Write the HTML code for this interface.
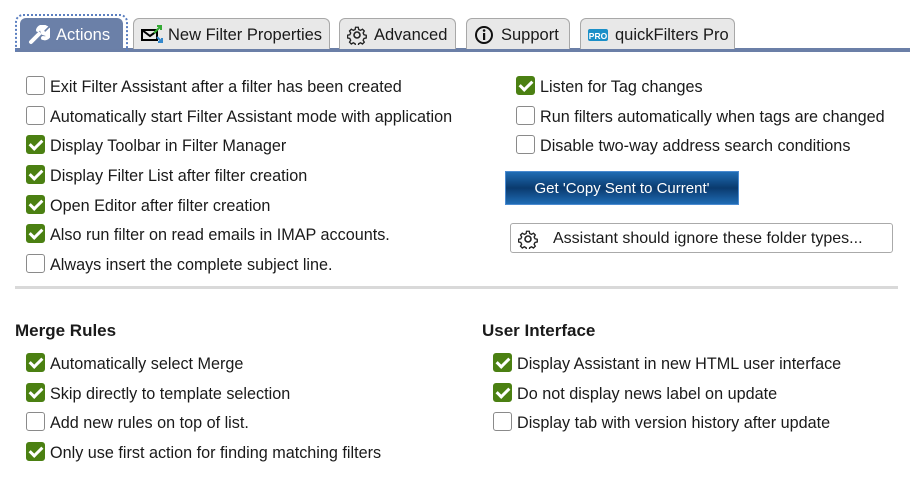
<!DOCTYPE html>
<html><head><meta charset="utf-8"><style>
*{box-sizing:border-box;margin:0;padding:0}
body{width:910px;height:480px;background:#fff;font-family:"Liberation Sans",sans-serif;color:#1a1a1a;position:relative;overflow:hidden;font-size:16.2px}
.a{position:absolute;white-space:nowrap}
.tab{position:absolute;top:18px;height:31px;border:1px solid #a8a8a8;border-bottom:none;border-radius:6px 6px 0 0;background:#e8e8e8;font-size:16.5px;line-height:32px;padding-left:34px}
.tab svg{position:absolute;left:7px;top:6px}
.cb{position:absolute;width:19px;height:19px;border:1px solid #8a8a8a;border-radius:3px;background:#fff}
.cb.on{background:#4b8012;border-color:#4b8012}
.cb.on:after{content:"";position:absolute;left:5px;top:1px;width:5px;height:10px;border:solid #fff;border-width:0 3px 3px 0;transform:rotate(45deg)}
.l{position:absolute;white-space:nowrap;line-height:22px}
h3{position:absolute;font-size:17px;font-weight:bold;white-space:nowrap}
</style></head><body>
<div class="a" style="left:15px;top:48px;width:895px;height:4px;background:#6b7fa7"></div>
<div class="a" style="left:15px;top:14px;width:113px;height:37px;border:2px dotted #5b7fc0;border-bottom:none;border-radius:8px 8px 0 0"></div>
<div class="tab" style="left:20px;width:103px;background:#6b80a8;border-color:#6b80a8;color:#fff;padding-left:35px">
<svg width="22" height="20" viewBox="0 0 22 20"><path d="M3 17 L11 9 M10 5 a5 5 0 0 1 7-3 l-3 3 1 3 3 1 3-3 a5 5 0 0 1-6 7" stroke="#fff" stroke-width="4" fill="none" stroke-linecap="round"/></svg>Actions</div>
<div class="tab" style="left:133px;width:197px">
<svg width="24" height="20" viewBox="0 0 24 20"><rect x="1" y="5" width="15" height="10" fill="none" stroke="#000" stroke-width="2"/><path d="M1 5 l8 6 7-5" stroke="#000" stroke-width="2" fill="none"/><path d="M13 8 l7-7 M16 1h4v4" stroke="#3a3" stroke-width="2" fill="none"/><path d="M16 12 l5 5 M17 17h4v-4" stroke="#38c" stroke-width="2" fill="none"/></svg>New Filter Properties</div>
<div class="tab" style="left:339px;width:117px">
<svg width="20" height="20" viewBox="0 0 20 20"><circle cx="10" cy="10" r="3" fill="none" stroke="#222" stroke-width="1.6"/><path d="M8.5 1.5h3l.5 2.5 2 1 2.2-1.3 2 2-1.3 2.2 1 2 2.5.5v3l-2.5.5-1 2 1.3 2.2-2 2-2.2-1.3-2 1-.5 2.5h-3l-.5-2.5-2-1-2.2 1.3-2-2 1.3-2.2-1-2-2.5-.5v-3l2.5-.5 1-2-1.3-2.2 2-2 2.2 1.3 2-1z" fill="none" stroke="#222" stroke-width="1.5" transform="scale(.9) translate(1 1)"/></svg>Advanced</div>
<div class="tab" style="left:466px;width:104px">
<svg width="20" height="20" viewBox="0 0 20 20"><circle cx="10" cy="10" r="8" fill="none" stroke="#111" stroke-width="2"/><rect x="9" y="8" width="2.2" height="7" fill="#111"/><circle cx="10.1" cy="5.5" r="1.3" fill="#111"/></svg>Support</div>
<div class="tab" style="left:580px;width:155px">
<svg width="22" height="20" viewBox="0 0 22 20"><rect x="0" y="4" width="20" height="12" rx="2" fill="#1a8fc8"/><text x="10" y="14" font-size="8.5" font-weight="bold" fill="#fff" text-anchor="middle" font-family="Liberation Sans">PRO</text></svg>quickFilters Pro</div>

<div class="cb" style="left:26px;top:76px"></div><div class="l" style="left:50px;top:76px">Exit Filter Assistant after a filter has been created</div>
<div class="cb" style="left:26px;top:106px"></div><div class="l" style="left:50px;top:106px">Automatically start Filter Assistant mode with application</div>
<div class="cb on" style="left:26px;top:135px"></div><div class="l" style="left:50px;top:135px">Display Toolbar in Filter Manager</div>
<div class="cb on" style="left:26px;top:165px"></div><div class="l" style="left:50px;top:165px">Display Filter List after filter creation</div>
<div class="cb on" style="left:26px;top:195px"></div><div class="l" style="left:50px;top:195px">Open Editor after filter creation</div>
<div class="cb on" style="left:26px;top:224px"></div><div class="l" style="left:50px;top:224px">Also run filter on read emails in IMAP accounts.</div>
<div class="cb" style="left:26px;top:254px"></div><div class="l" style="left:50px;top:254px">Always insert the complete subject line.</div>

<div class="cb on" style="left:516px;top:76px"></div><div class="l" style="left:540px;top:76px">Listen for Tag changes</div>
<div class="cb" style="left:516px;top:106px"></div><div class="l" style="left:540px;top:106px">Run filters automatically when tags are changed</div>
<div class="cb" style="left:516px;top:135px"></div><div class="l" style="left:540px;top:135px">Disable two-way address search conditions</div>

<div class="a" style="left:505px;top:171px;width:234px;height:34px;background:linear-gradient(#1f6cb4,#0a3a6e 50%,#1f6cb4);border:1px solid #4a8ad0;color:#fff;font-size:15px;text-align:center;line-height:33px">Get 'Copy Sent to Current'</div>
<div class="a" style="left:510px;top:223px;width:383px;height:30px;border:1px solid #aaa;border-radius:3px;background:#fff;font-size:16px;line-height:29px;padding-left:42px">
<svg style="position:absolute;left:7px;top:5px" width="20" height="20" viewBox="0 0 20 20"><circle cx="10" cy="10" r="3" fill="none" stroke="#222" stroke-width="1.6"/><path d="M8.5 1.5h3l.5 2.5 2 1 2.2-1.3 2 2-1.3 2.2 1 2 2.5.5v3l-2.5.5-1 2 1.3 2.2-2 2-2.2-1.3-2 1-.5 2.5h-3l-.5-2.5-2-1-2.2 1.3-2-2 1.3-2.2-1-2-2.5-.5v-3l2.5-.5 1-2-1.3-2.2 2-2 2.2 1.3 2-1z" fill="none" stroke="#222" stroke-width="1.5" transform="scale(.9) translate(1 1)"/></svg>Assistant should ignore these folder types...</div>

<div class="a" style="left:15px;top:286px;width:883px;height:3px;background:#d9d9d9"></div>

<h3 style="left:15px;top:321px">Merge Rules</h3>
<div class="cb on" style="left:26px;top:353px"></div><div class="l" style="left:50px;top:353px">Automatically select Merge</div>
<div class="cb on" style="left:26px;top:383px"></div><div class="l" style="left:50px;top:383px">Skip directly to template selection</div>
<div class="cb" style="left:26px;top:412px"></div><div class="l" style="left:50px;top:412px">Add new rules on top of list.</div>
<div class="cb on" style="left:26px;top:442px"></div><div class="l" style="left:50px;top:442px">Only use first action for finding matching filters</div>

<h3 style="left:482px;top:321px">User Interface</h3>
<div class="cb on" style="left:493px;top:353px"></div><div class="l" style="left:517px;top:353px">Display Assistant in new HTML user interface</div>
<div class="cb on" style="left:493px;top:383px"></div><div class="l" style="left:517px;top:383px">Do not display news label on update</div>
<div class="cb" style="left:493px;top:412px"></div><div class="l" style="left:517px;top:412px">Display tab with version history after update</div>
</body></html>
